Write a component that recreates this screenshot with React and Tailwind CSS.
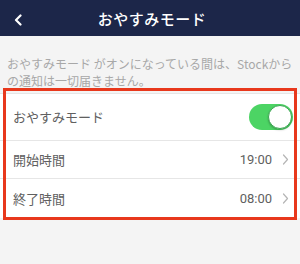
import React from "react";

const font = { fontFamily: '"Noto Sans CJK JP", "Noto Sans", sans-serif' };

function Chevron() {
  return (
    <svg width="7" height="11" viewBox="0 0 7 11" fill="none">
      <path d="M1.5 1 L5.5 5.5 L1.5 10" stroke="#b5b5b5" strokeWidth="1.2" strokeLinecap="round" strokeLinejoin="round" />
    </svg>
  );
}

export default function App() {
  return (
    <div className="relative w-[300px] h-[264px] bg-[#f4f4f4] overflow-hidden" style={font}>
      {/* Header */}
      <div className="relative h-[36px] bg-[#1c2649] flex items-center justify-center">
        <svg className="absolute left-[14px] top-[14px]" width="9" height="12" viewBox="0 0 9 12" fill="none">
          <path d="M6.5 1.5 L2 6 L6.5 10.5" stroke="#ffffff" strokeWidth="2.2" strokeLinecap="round" strokeLinejoin="round" />
        </svg>
        <span className="text-white text-[15px] font-medium leading-none tracking-[0.5px] pl-[4px]">おやすみモード</span>
      </div>

      {/* Description */}
      <p className="pl-[7px] pr-[4px] pt-[19px] text-[12px] leading-[17px] text-[#a8a8a8]">
        おやすみモード がオンになっている間は、Stockからの通知は一切届きません。
      </p>

      {/* Settings list */}
      <div className="mt-[4px] bg-white border-t border-[#e6e6e6]">
        <div className="h-[47px] flex items-center justify-between pl-[13px] pr-[7px] border-b border-[#e6e6e6]">
          <span className="text-[13px] text-[#606060]">おやすみモード</span>
          <div className="w-[44px] h-[26px] rounded-full bg-[#4cd464] flex items-center justify-end p-[1px]">
            <div className="w-[24px] h-[24px] rounded-full bg-white border border-[#3aa852] shadow-[0_1px_2px_rgba(0,0,0,0.25)]" />
          </div>
        </div>
        <div className="h-[38px] flex items-center justify-between pl-[13px] pr-[11px] border-b border-[#e6e6e6]">
          <span className="text-[13px] text-[#606060]">開始時間</span>
          <div className="flex items-center gap-[10px]">
            <span className="text-[13px] text-[#606060]" style={{ fontFamily: "Roboto, sans-serif" }}>19:00</span>
            <Chevron />
          </div>
        </div>
        <div className="h-[39px] flex items-center justify-between pl-[13px] pr-[11px]">
          <span className="text-[13px] text-[#606060]">終了時間</span>
          <div className="flex items-center gap-[10px]">
            <span className="text-[13px] text-[#606060]" style={{ fontFamily: "Roboto, sans-serif" }}>08:00</span>
            <Chevron />
          </div>
        </div>
      </div>

      {/* Red annotation box */}
      <div className="absolute left-[3px] top-[88px] w-[294px] h-[132px] border-[3px] border-[#e8381c] pointer-events-none" />
    </div>
  );
}
